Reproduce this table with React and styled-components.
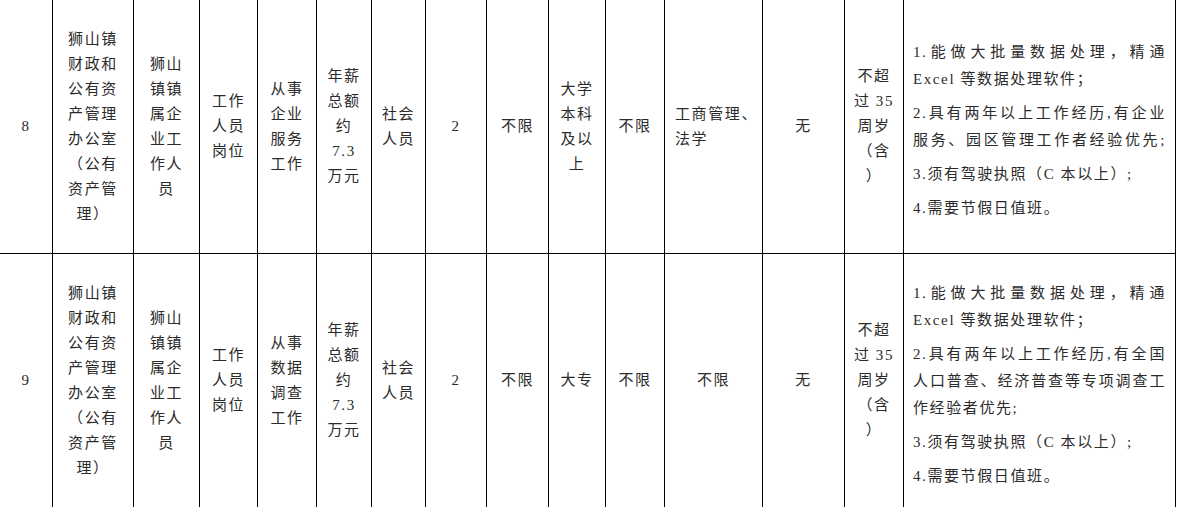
import styled, { createGlobalStyle } from 'styled-components'

const GlobalStyle = createGlobalStyle`
    html, body {
        margin: 0;
        padding: 0;
        background: #fff;
        overflow: hidden;
    }
`

const Table = styled.table`
    border-collapse: collapse;
    table-layout: fixed;
    width: 1176px;
    margin: -1px 0 0 -1px;
    font-family: "Liberation Serif", "Noto Sans CJK SC", serif;
    font-size: 15px;
    color: #2b2b2b;
`

const Row = styled.tr`
    height: 254px;
`

const Cell = styled.td`
    border: 1px solid #000;
    padding: ${p => p.$pad || '0'};
    text-align: ${p => p.$align || 'center'};
    vertical-align: middle;
    line-height: 25px;
    letter-spacing: 1.6px;
    overflow: hidden;
`

const Line = styled.span`
    display: block;
    white-space: nowrap;
`

const Para = styled.div`
    line-height: 27px;
    letter-spacing: 1.6px;
    & + & {
        margin-top: 7px;
    }
`

const ParaLine = styled.span`
    display: block;
    white-space: nowrap;
    text-align: ${p => p.$full ? 'justify' : 'left'};
    text-align-last: ${p => p.$full ? 'justify' : 'left'};
`

const columns = [
    { width: 53 },
    { width: 81 },
    { width: 66 },
    { width: 58 },
    { width: 59 },
    { width: 55 },
    { width: 54 },
    { width: 61 },
    { width: 62 },
    { width: 57 },
    { width: 59 },
    { width: 98 },
    { width: 82 },
    { width: 59 },
    { width: 272 },
]

const office = ['狮山镇', '财政和', '公有资', '产管理', '办公室', '（公有', '资产管', '理）']
const unit = ['狮山', '镇镇', '属企', '业工', '作人', '员']
const post = ['工作', '人员', '岗位']
const salary = ['年薪', '总额', '约', '7.3', '万元']
const source = ['社会', '人员']
const age = ['不超', '过 35', '周岁', '（含', '）']

const rows = [
    {
        cells: [
            ['8'], office, unit, post,
            ['从事', '企业', '服务', '工作'],
            salary, source, ['2'], ['不限'],
            ['大学', '本科', '及以', '上'],
            ['不限'],
            { lines: ['工商管理、', '法学'], align: 'left', pad: '0 0 0 10px' },
            ['无'], age,
        ],
        notes: [
            [['1.能做大批量数据处理，精通', true], ['Excel 等数据处理软件；']],
            [['2.具有两年以上工作经历,有企业', true], ['服务、园区管理工作者经验优先;', true]],
            [['3.须有驾驶执照（C 本以上）;']],
            [['4.需要节假日值班。']],
        ],
    },
    {
        cells: [
            ['9'], office, unit, post,
            ['从事', '数据', '调查', '工作'],
            salary, source, ['2'], ['不限'],
            ['大专'],
            ['不限'],
            ['不限'],
            ['无'], age,
        ],
        notes: [
            [['1.能做大批量数据处理，精通', true], ['Excel 等数据处理软件；']],
            [['2.具有两年以上工作经历,有全国', true], ['人口普查、经济普查等专项调查工', true], ['作经验者优先;']],
            [['3.须有驾驶执照（C 本以上）;']],
            [['4.需要节假日值班。']],
        ],
    },
]

const App = () => {
    return (
    <>
        <GlobalStyle />
        <Table>
            <colgroup>
                {columns.map((c, i) => <col key={i} style={{ width: c.width }} />)}
            </colgroup>
            <tbody>
                {rows.map((row, r) => (
                    <Row key={r}>
                        {row.cells.map((cell, i) => {
                            const lines = Array.isArray(cell) ? cell : cell.lines
                            return (
                                <Cell key={i} $align={cell.align} $pad={cell.pad}>
                                    {lines.map((l, j) => <Line key={j}>{l}</Line>)}
                                </Cell>
                            )
                        })}
                        <Cell $align="left" $pad="8px 9px 0 9px">
                            {row.notes.map((para, p) => (
                                <Para key={p}>
                                    {para.map(([text, full], j) => <ParaLine key={j} $full={full}>{text}</ParaLine>)}
                                </Para>
                            ))}
                        </Cell>
                    </Row>
                ))}
            </tbody>
        </Table>
    </>
  )
}

export default App
